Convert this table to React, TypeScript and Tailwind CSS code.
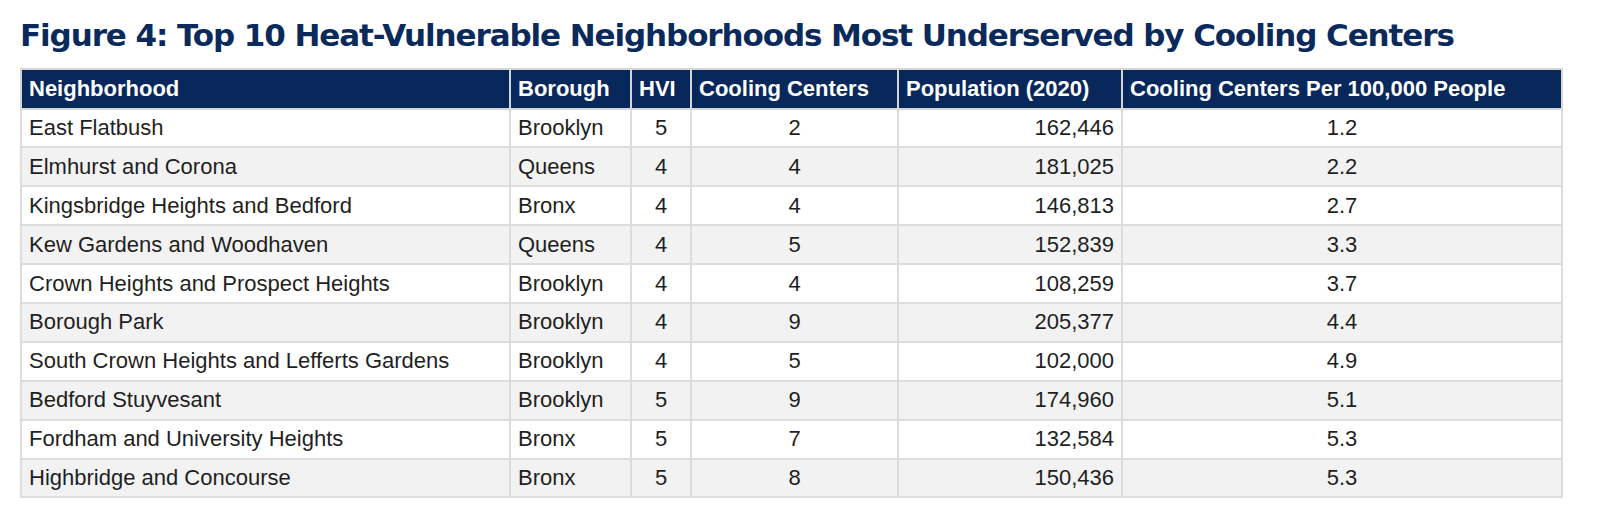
import React from 'react';

type Row = {
  name: string;
  borough: string;
  hvi: number;
  centers: number;
  population: string;
  per100k: string;
};

const rows: Row[] = [
  { name: 'East Flatbush', borough: 'Brooklyn', hvi: 5, centers: 2, population: '162,446', per100k: '1.2' },
  { name: 'Elmhurst and Corona', borough: 'Queens', hvi: 4, centers: 4, population: '181,025', per100k: '2.2' },
  { name: 'Kingsbridge Heights and Bedford', borough: 'Bronx', hvi: 4, centers: 4, population: '146,813', per100k: '2.7' },
  { name: 'Kew Gardens and Woodhaven', borough: 'Queens', hvi: 4, centers: 5, population: '152,839', per100k: '3.3' },
  { name: 'Crown Heights and Prospect Heights', borough: 'Brooklyn', hvi: 4, centers: 4, population: '108,259', per100k: '3.7' },
  { name: 'Borough Park', borough: 'Brooklyn', hvi: 4, centers: 9, population: '205,377', per100k: '4.4' },
  { name: 'South Crown Heights and Lefferts Gardens', borough: 'Brooklyn', hvi: 4, centers: 5, population: '102,000', per100k: '4.9' },
  { name: 'Bedford Stuyvesant', borough: 'Brooklyn', hvi: 5, centers: 9, population: '174,960', per100k: '5.1' },
  { name: 'Fordham and University Heights', borough: 'Bronx', hvi: 5, centers: 7, population: '132,584', per100k: '5.3' },
  { name: 'Highbridge and Concourse', borough: 'Bronx', hvi: 5, centers: 8, population: '150,436', per100k: '5.3' },
];

const cell = 'border-2 border-[#dcdcdc] px-[7px] h-[38.9px] leading-none';
const head = 'border-2 border-[#d6d6d6] px-[7px] h-[39.5px] leading-none font-bold text-white text-left';

export default function App() {
  return (
    <div className="w-[1600px] h-[523px] bg-white pl-[20px] pt-[20px]">
      <h1
        className="text-[#0b2a5c] text-[31px] font-bold leading-none tracking-[-1.1px] whitespace-nowrap mb-[17px]"
        style={{ fontFamily: '"DejaVu Sans", sans-serif' }}
      >
        Figure 4: Top 10 Heat-Vulnerable Neighborhoods Most Underserved by Cooling Centers
      </h1>
      <table
        className="table-fixed border-collapse w-[1541px] text-[22px] text-[#1f1f1f]"
        style={{ fontFamily: '"Liberation Sans", Arial, sans-serif' }}
      >
        <colgroup>
          <col className="w-[489px]" />
          <col className="w-[121px]" />
          <col className="w-[60px]" />
          <col className="w-[207px]" />
          <col className="w-[224px]" />
          <col className="w-[440px]" />
        </colgroup>
        <thead>
          <tr className="bg-[#08285b]">
            <th className={head}>Neighborhood</th>
            <th className={head}>Borough</th>
            <th className={head}>HVI</th>
            <th className={head}>Cooling Centers</th>
            <th className={head}>Population (2020)</th>
            <th className={head}>Cooling Centers Per 100,000 People</th>
          </tr>
        </thead>
        <tbody>
          {rows.map((r, i) => (
            <tr key={r.name} className={i % 2 === 1 ? 'bg-[#f2f2f2]' : 'bg-white'}>
              <td className={cell}>{r.name}</td>
              <td className={cell}>{r.borough}</td>
              <td className={`${cell} text-center`}>{r.hvi}</td>
              <td className={`${cell} text-center`}>{r.centers}</td>
              <td className={`${cell} text-right`}>{r.population}</td>
              <td className={`${cell} text-center`}>{r.per100k}</td>
            </tr>
          ))}
        </tbody>
      </table>
    </div>
  );
}
